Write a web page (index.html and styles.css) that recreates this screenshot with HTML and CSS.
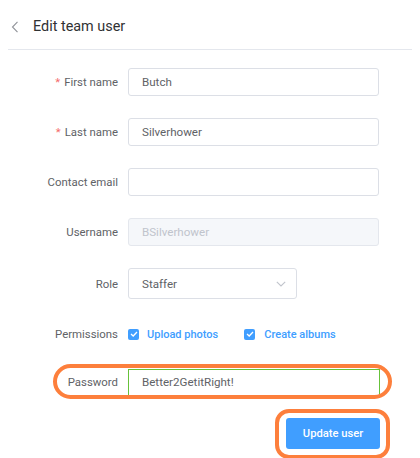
FILE: index.html
```html
<!DOCTYPE html>
<html>
<head>
<meta charset="utf-8">
<link rel="stylesheet" href="styles.css">
</head>
<body>
<div class="page">
  <header class="header">
    <svg class="back" width="8" height="12" viewBox="0 0 8 12"><path d="M6.5 0.8 L1.5 6 L6.5 11.2" fill="none" stroke="#909399" stroke-width="1.1"/></svg>
    <span class="title">Edit team user</span>
  </header>
  <form class="form">
    <div class="row">
      <label class="label"><span class="req">*</span>First name</label>
      <div class="input wide">Butch</div>
    </div>
    <div class="row">
      <label class="label"><span class="req">*</span>Last name</label>
      <div class="input wide">Silverhower</div>
    </div>
    <div class="row">
      <label class="label">Contact email</label>
      <div class="input wide"></div>
    </div>
    <div class="row">
      <label class="label">Username</label>
      <div class="input wide disabled">BSilverhower</div>
    </div>
    <div class="row row-role">
      <label class="label">Role</label>
      <div class="input select">Staffer
        <svg class="caret" width="10" height="6" viewBox="0 0 10 6"><path d="M0.8 0.8 L5 5 L9.2 0.8" fill="none" stroke="#c0c4cc" stroke-width="1.1"/></svg>
      </div>
    </div>
    <div class="row row-perm">
      <label class="label">Permissions</label>
      <div class="checks">
        <span class="check"><span class="box"><svg width="8" height="6" viewBox="0 0 8 6"><path d="M1 3 L3.2 5 L7 1" fill="none" stroke="#fff" stroke-width="1.3"/></svg></span>Upload photos</span>
        <span class="check"><span class="box"><svg width="8" height="6" viewBox="0 0 8 6"><path d="M1 3 L3.2 5 L7 1" fill="none" stroke="#fff" stroke-width="1.3"/></svg></span>Create albums</span>
      </div>
    </div>
    <div class="row row-pass">
      <label class="label">Password</label>
      <div class="input wide focus">Better2GetitRight!</div>
      <span class="ring ring-pass"></span>
    </div>
    <div class="actions">
      <div class="btn-wrap">
        <button type="button" class="btn">Update user</button>
        <span class="ring ring-btn"></span>
      </div>
    </div>
  </form>
</div>
</body>
</html>
```
FILE: styles.css
```css
* { box-sizing: border-box; }
html, body { margin: 0; padding: 0; background: #fff; }
body { font-family: Roboto, "Noto Sans", "Liberation Sans", sans-serif; color: #606266; }
.page { width: 420px; height: 458px; overflow: hidden; }
.header {
  margin: 0 8px;
  height: 50px;
  border-bottom: 1px solid #e4e7ed;
  display: flex;
  align-items: center;
  padding-left: 3px;
  padding-top: 4px;
}
.back { margin-right: 14px; }
.title { font-size: 14.4px; color: #303133; }
.form { padding-top: 18px; }
.row {
  display: flex;
  align-items: center;
  height: 28px;
  margin-bottom: 22px;
  position: relative;
}
.label {
  width: 118px;
  text-align: right;
  font-size: 11.4px;
  color: #606266;
  margin-right: 10px;
  flex: none;
}
.req { color: #f56c6c; margin-right: 4px; }
.input {
  height: 28px;
  border: 1px solid #dcdfe6;
  border-radius: 3px;
  font-size: 11.6px;
  color: #606266;
  padding: 0 13px;
  display: flex;
  align-items: center;
}
.wide { width: 251px; }
.disabled { background: #f5f7fa; border-color: #e4e7ed; color: #c0c4cc; }
.row-role { height: 31px; margin-bottom: 20px; }
.select { width: 169px; height: 31px; position: relative; justify-content: space-between; padding-right: 10px; }
.caret { margin-top: 1px; }
.row-perm { height: 30px; margin-bottom: 19px; }
.checks { display: flex; align-items: center; }
.check {
  display: flex; align-items: center;
  font-size: 11px; font-weight: 500; color: #409eff;
  margin-right: 26px;
}
.box {
  width: 11px; height: 11px; border-radius: 2px;
  background: #409eff;
  display: inline-flex; align-items: center; justify-content: center;
  margin-right: 8px;
}
.check + .check .box { margin-right: 9px; }
.focus { border: 1px solid #67c23a; border-radius: 0; height: 27px; width: 252px; }
.row-pass { margin-bottom: 22px; }
.ring {
  position: absolute;
  border: 4px solid #fd7f3c;
  pointer-events: none;
}
.ring-pass { left: 53px; top: -4px; width: 339px; height: 35px; border-radius: 18px; }
.actions { display: flex; justify-content: flex-end; padding-right: 40px; }
.btn-wrap { position: relative; }
.btn {
  width: 94px; height: 31px;
  background: #409eff; color: #fff;
  border: none; border-radius: 3px;
  font-family: inherit; font-size: 11.2px; font-weight: 500;
}
.ring-btn { left: -11px; top: -9px; width: 115px; height: 50px; border-radius: 14px; }
```
